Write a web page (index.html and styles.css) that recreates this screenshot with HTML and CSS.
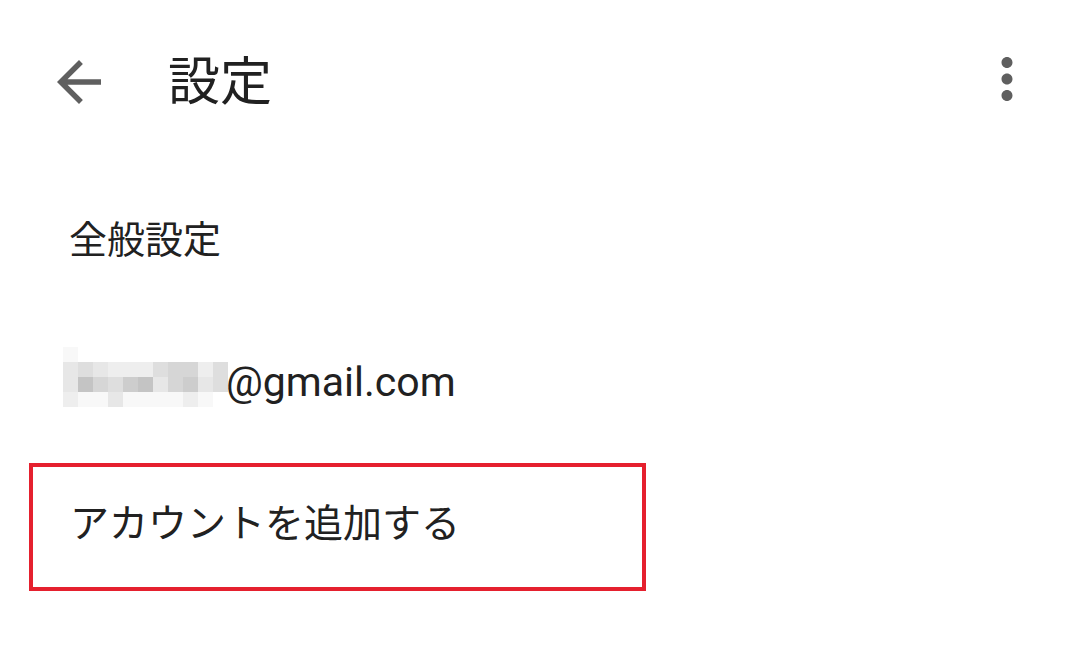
FILE: index.html
```html
<!DOCTYPE html>
<html lang="ja">
<head>
<meta charset="utf-8">
<link rel="stylesheet" href="styles.css">
</head>
<body>
<div class="screen">
  <header class="appbar">
    <svg class="icon back" viewBox="0 0 24 24"><path d="M20 11H7.83l5.59-5.59L12 4l-8 8 8 8 1.41-1.41L7.83 13H20v-2z"/></svg>
    <h1 class="title">設定</h1>
    <svg class="icon more" viewBox="0 0 24 24"><path d="M12 8c1.1 0 2-.9 2-2s-.9-2-2-2-2 .9-2 2 .9 2 2 2zm0 2c-1.1 0-2 .9-2 2s.9 2 2 2 2-.9 2-2-.9-2-2-2zm0 6c-1.1 0-2 .9-2 2s.9 2 2 2 2-.9 2-2-.9-2-2-2z"/></svg>
  </header>
  <ul class="list">
    <li class="item general">全般設定</li>
    <li class="item account">
      <div class="mosaic">
        <i class="s1"></i><i></i><i></i><i></i><i></i><i></i><i></i><i></i><i></i><i></i><i></i>
        <i class="s3"></i><i class="s4"></i><i class="s3"></i><i class="s2"></i><i class="s2"></i><i class="s2"></i><i class="s4"></i><i class="s5"></i><i class="s5"></i><i class="s2"></i><i class="s4"></i>
        <i class="s3"></i><i class="s7"></i><i class="s5"></i><i class="s4"></i><i class="s6"></i><i class="s7"></i><i class="s3"></i><i class="s5"></i><i class="s6"></i><i class="s3"></i><i class="s4"></i>
        <i class="s2"></i><i class="s1"></i><i class="s1"></i><i class="s3"></i><i class="s1"></i><i class="s1"></i><i class="s1"></i><i class="s1"></i><i class="s2"></i><i class="s1"></i><i></i>
      </div>
      <span class="email">@gmail.com</span>
    </li>
    <li class="item add">
      <div class="highlight">アカウントを追加する</div>
    </li>
  </ul>
</div>
</body>
</html>
```

FILE: styles.css
```css
html, body {
  margin: 0;
  padding: 0;
  background: #ffffff;
}

.screen {
  width: 1080px;
  height: 663px;
  overflow: hidden;
  font-family: "Noto Sans CJK JP", "Noto Sans", sans-serif;
  color: #212121;
}

.appbar {
  display: flex;
  align-items: center;
  height: 162px;
  padding-left: 46px;
  padding-right: 40px;
}

.icon {
  width: 66px;
  height: 66px;
  fill: #5f5f5f;
  flex: none;
}

.back {
  margin-top: 1px;
}

.more {
  margin-left: auto;
  margin-top: -5px;
}

.title {
  margin: -7px 0 0 56px;
  font-size: 52px;
  font-weight: 400;
  line-height: 1;
  letter-spacing: 0;
}

.list {
  list-style: none;
  margin: 0;
  padding: 0;
}

.item {
  display: flex;
  align-items: center;
  font-size: 38px;
  line-height: 1;
}

.general {
  height: 150px;
  padding-left: 69px;
}

.account {
  height: 140px;
  padding-left: 63px;
}

.mosaic {
  display: grid;
  grid-template-columns: repeat(11, 15px);
  grid-template-rows: repeat(4, 15px);
  margin-bottom: 10px;
}

.mosaic i { background: #ffffff; }
.mosaic .s1 { background: #f8f8f8; }
.mosaic .s2 { background: #eeeeee; }
.mosaic .s3 { background: #e7e7e7; }
.mosaic .s4 { background: #dedede; }
.mosaic .s5 { background: #d6d6d6; }
.mosaic .s6 { background: #cdcdcd; }
.mosaic .s7 { background: #c4c4c4; }

.email {
  font-family: Roboto, "Liberation Sans", sans-serif;
  font-size: 41px;
  margin-left: -2px;
}

.add {
  padding-top: 11px;
  padding-left: 29px;
}

.highlight {
  box-sizing: border-box;
  width: 617px;
  height: 128px;
  border: 4px solid #e5202e;
  display: flex;
  align-items: center;
  padding-left: 37px;
  padding-bottom: 14px;
  font-size: 39px;
}
```
